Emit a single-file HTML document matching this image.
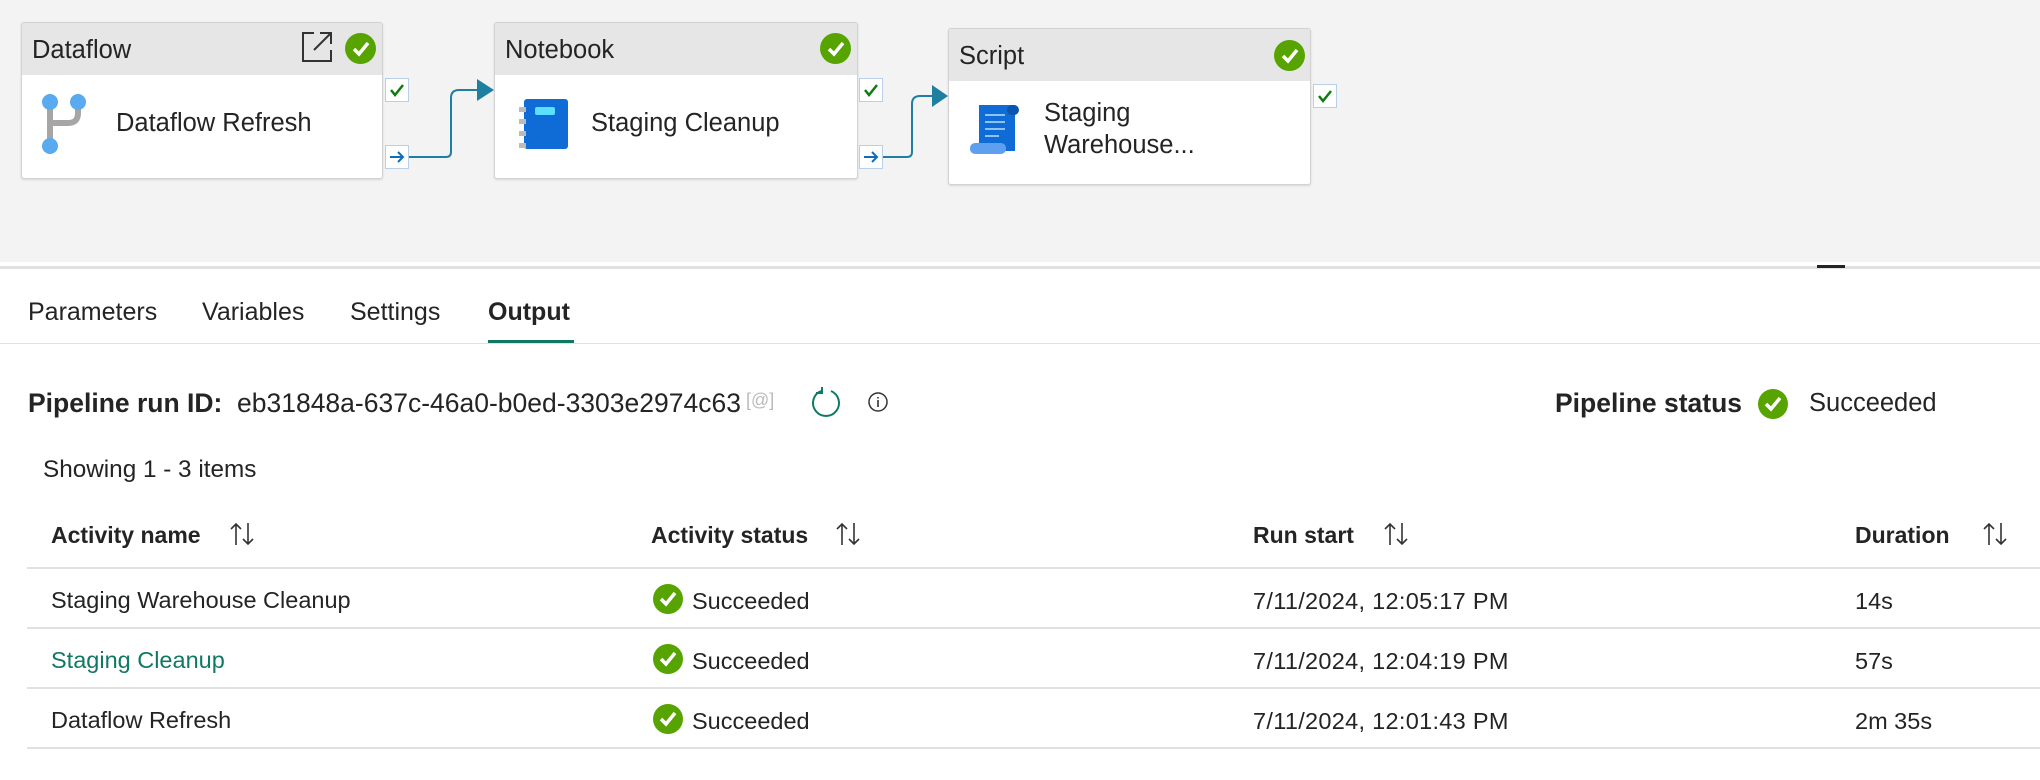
<!DOCTYPE html>
<html><head><style>
*{margin:0;padding:0;box-sizing:border-box}
body{width:2040px;height:780px;background:#fff;font-family:"Liberation Sans",sans-serif;color:#242424;position:relative;overflow:hidden}
.a{position:absolute;white-space:nowrap}
.canvas{position:absolute;left:0;top:0;width:2040px;height:262px;background:#f3f3f3}
.card{position:absolute;background:#fff;border:1px solid #d2d2d2;border-radius:3px;box-shadow:0 1px 2px rgba(0,0,0,.12);overflow:hidden}
.hdr{height:52px;background:#e6e6e6;font-size:25.5px;padding:13px 0 0 10px}
.chk{position:absolute;width:31px;height:31px;border-radius:50%;background:#57a300}
.chk svg{position:absolute;left:0;top:0}
.port{position:absolute;width:24px;height:24px;background:#fff;border:1px solid #b9cfe8}
.t{font-size:23.5px}
.hline{position:absolute;left:27px;right:0;height:2px;background:#e1e1e1}
.th{font-size:23px;font-weight:bold;color:#242424}
.sc{position:absolute;width:26px;height:26px;border-radius:50%;background:#57a300}
.so{position:absolute}
</style></head><body>
<div class="canvas"></div>
<div class="a" style="left:0;top:266px;width:2040px;height:3px;background:#e1e1e1"></div>
<div class="a" style="left:1817px;top:265px;width:28px;height:3px;background:#242424"></div>

<!-- Dataflow card -->
<div class="card" style="left:21px;top:22px;width:362px;height:157px">
 <div class="hdr">Dataflow</div>
 <div class="a" style="left:94px;top:86px;font-size:25.5px">Dataflow Refresh</div>
 <svg class="a" style="left:20px;top:70px" width="44" height="62"><path d="M8 10V52M36 12v8q0 10-10 10H8" stroke="#a6a6a6" stroke-width="6" fill="none"/><circle cx="8" cy="9" r="8" fill="#5aaaf0"/><circle cx="36" cy="9" r="8" fill="#5aaaf0"/><circle cx="8" cy="53" r="8" fill="#5aaaf0"/></svg>
</div>
<svg class="a" style="left:300px;top:30px" width="34" height="34"><path d="M14 3H3v28h28V20M20 3h11v11M31 3L14 20" stroke="#333" stroke-width="2" fill="none"/></svg>
<div class="chk" style="left:345px;top:33px"><svg width="31" height="31"><path d="M9 16l5 5 9-11" stroke="#fff" stroke-width="3.5" fill="none"/></svg></div>

<!-- Notebook card -->
<div class="card" style="left:494px;top:22px;width:364px;height:157px">
 <div class="hdr">Notebook</div>
 <div class="a" style="left:96px;top:86px;font-size:25.5px">Staging Cleanup</div>
 <div class="a" style="left:29px;top:76px;width:44px;height:50px;background:#0f6cd6;border-radius:3px"></div>
 <div class="a" style="left:40px;top:84px;width:20px;height:8px;background:#5ce0ff;border-radius:2px"></div>
 <div class="a" style="left:24px;top:84px;width:7px;height:5px;background:#bbb"></div>
 <div class="a" style="left:24px;top:96px;width:7px;height:5px;background:#bbb"></div>
 <div class="a" style="left:24px;top:108px;width:7px;height:5px;background:#bbb"></div>
 <div class="a" style="left:24px;top:120px;width:7px;height:5px;background:#bbb"></div>
</div>
<div class="chk" style="left:820px;top:33px"><svg width="31" height="31"><path d="M9 16l5 5 9-11" stroke="#fff" stroke-width="3.5" fill="none"/></svg></div>

<!-- Script card -->
<div class="card" style="left:948px;top:28px;width:363px;height:157px">
 <div class="hdr">Script</div>
 <div class="a" style="left:95px;top:68px;font-size:25.5px;line-height:32px">Staging<br>Warehouse...</div>
 <svg class="a" style="left:20px;top:74px" width="56" height="54"><rect x="10" y="2" width="36" height="46" fill="#0f6cd6"/><rect x="38" y="2" width="12" height="10" rx="5" fill="#0b55b0"/><rect x="1" y="40" width="36" height="11" rx="5" fill="#5ea0ef"/><path d="M16 12h20M16 19h20M16 26h20M16 33h14" stroke="#8ec2f7" stroke-width="2"/></svg>
</div>
<div class="chk" style="left:1274px;top:40px"><svg width="31" height="31"><path d="M9 16l5 5 9-11" stroke="#fff" stroke-width="3.5" fill="none"/></svg></div>

<!-- ports -->
<div class="port" style="left:385px;top:78px"><svg width="22" height="22"><path d="M5 11l4 5 8-10" stroke="#107c10" stroke-width="2.5" fill="none"/></svg></div>
<div class="port" style="left:385px;top:145px"><svg width="22" height="22"><path d="M4 11h13M12 6l5 5-5 5" stroke="#0f6cbd" stroke-width="2" fill="none"/></svg></div>
<div class="port" style="left:859px;top:78px"><svg width="22" height="22"><path d="M5 11l4 5 8-10" stroke="#107c10" stroke-width="2.5" fill="none"/></svg></div>
<div class="port" style="left:859px;top:145px"><svg width="22" height="22"><path d="M4 11h13M12 6l5 5-5 5" stroke="#0f6cbd" stroke-width="2" fill="none"/></svg></div>
<div class="port" style="left:1313px;top:84px"><svg width="22" height="22"><path d="M5 11l4 5 8-10" stroke="#107c10" stroke-width="2.5" fill="none"/></svg></div>
<svg class="a" style="left:0;top:0" width="2040" height="262"><path d="M409 157h37q5 0 5-5V98q0-8 8-8h20" stroke="#1e7fa0" stroke-width="2" fill="none"/><path d="M477 79l17 11-17 11z" fill="#1e7fa0"/><path d="M883 157h24q5 0 5-5V104q0-8 8-8h14" stroke="#1e7fa0" stroke-width="2" fill="none"/><path d="M932 85l16 11-16 11z" fill="#1e7fa0"/></svg>

<!-- tabs -->
<div class="a" style="left:28px;top:298px;font-size:25px">Parameters</div>
<div class="a" style="left:202px;top:298px;font-size:25px">Variables</div>
<div class="a" style="left:350px;top:298px;font-size:25px">Settings</div>
<div class="a" style="left:488px;top:298px;font-size:25px;font-weight:bold">Output</div>
<div class="a" style="left:488px;top:340px;width:86px;height:3px;background:#117865"></div>
<div class="a" style="left:0;top:343px;width:2040px;height:1px;background:#e1e1e1"></div>

<div class="a" style="left:28px;top:388px;font-size:26.5px;font-weight:bold">Pipeline run ID:</div>
<div class="a" style="left:237px;top:388px;font-size:26.5px">eb31848a-637c-46a0-b0ed-3303e2974c63</div>
<div class="a" style="left:746px;top:390px;font-size:18px;color:#bbb">[@]</div>
<svg class="a" style="left:810px;top:386px" width="34" height="34"><path d="M11 5A13 13 0 1 0 21 5" stroke="#117865" stroke-width="2" fill="none"/><path d="M12 1v6h-6" stroke="#117865" stroke-width="2" fill="none"/></svg>
<svg class="a" style="left:867px;top:391px" width="22" height="22"><circle cx="11" cy="11" r="9" stroke="#333" stroke-width="1.5" fill="none"/><path d="M11 9v7M11 6v1.5" stroke="#333" stroke-width="1.6"/></svg>

<div class="a" style="left:1555px;top:388px;font-size:26.5px;font-weight:bold">Pipeline status</div>
<div class="sc" style="left:1758px;top:389px;width:30px;height:30px"><svg width="30" height="30"><path d="M8 15l5 5 9-11" stroke="#fff" stroke-width="3.5" fill="none"/></svg></div>
<div class="a" style="left:1809px;top:389px;font-size:25.5px">Succeeded</div>

<div class="a" style="left:43px;top:456px;font-size:24.3px">Showing 1 - 3 items</div>

<div class="a th" style="left:51px;top:522px">Activity name</div>
<div class="a th" style="left:651px;top:522px">Activity status</div>
<div class="a th" style="left:1253px;top:522px">Run start</div>
<div class="a th" style="left:1855px;top:522px">Duration</div>
<svg class="so" style="left:228px;top:521px" width="30" height="26"><path d="M8 24V3M3 8l5-5 5 5M20 2v21M15 18l5 5 5-5" stroke="#333" stroke-width="1.6" fill="none"/></svg>
<svg class="so" style="left:834px;top:521px" width="30" height="26"><path d="M8 24V3M3 8l5-5 5 5M20 2v21M15 18l5 5 5-5" stroke="#333" stroke-width="1.6" fill="none"/></svg>
<svg class="so" style="left:1382px;top:521px" width="30" height="26"><path d="M8 24V3M3 8l5-5 5 5M20 2v21M15 18l5 5 5-5" stroke="#333" stroke-width="1.6" fill="none"/></svg>
<svg class="so" style="left:1981px;top:521px" width="30" height="26"><path d="M8 24V3M3 8l5-5 5 5M20 2v21M15 18l5 5 5-5" stroke="#333" stroke-width="1.6" fill="none"/></svg>
<div class="hline" style="top:567px"></div>
<div class="hline" style="top:627px"></div>
<div class="hline" style="top:687px"></div>
<div class="hline" style="top:747px"></div>

<div class="a t" style="left:51px;top:587px">Staging Warehouse Cleanup</div>
<div class="a t" style="left:51px;top:647px;color:#117865">Staging Cleanup</div>
<div class="a t" style="left:51px;top:707px">Dataflow Refresh</div>

<div class="sc" style="left:653px;top:584px;width:30px;height:30px"><svg width="30" height="30"><path d="M8 15l5 5 9-11" stroke="#fff" stroke-width="3.5" fill="none"/></svg></div>
<div class="sc" style="left:653px;top:644px;width:30px;height:30px"><svg width="30" height="30"><path d="M8 15l5 5 9-11" stroke="#fff" stroke-width="3.5" fill="none"/></svg></div>
<div class="sc" style="left:653px;top:704px;width:30px;height:30px"><svg width="30" height="30"><path d="M8 15l5 5 9-11" stroke="#fff" stroke-width="3.5" fill="none"/></svg></div>
<div class="a t" style="left:692px;top:588px">Succeeded</div>
<div class="a t" style="left:692px;top:648px">Succeeded</div>
<div class="a t" style="left:692px;top:708px">Succeeded</div>

<div class="a t" style="left:1253px;top:588px;letter-spacing:0.3px">7/11/2024, 12:05:17 PM</div>
<div class="a t" style="left:1253px;top:648px;letter-spacing:0.3px">7/11/2024, 12:04:19 PM</div>
<div class="a t" style="left:1253px;top:708px;letter-spacing:0.3px">7/11/2024, 12:01:43 PM</div>
<div class="a t" style="left:1855px;top:588px">14s</div>
<div class="a t" style="left:1855px;top:648px">57s</div>
<div class="a t" style="left:1855px;top:708px">2m 35s</div>
</body></html>
